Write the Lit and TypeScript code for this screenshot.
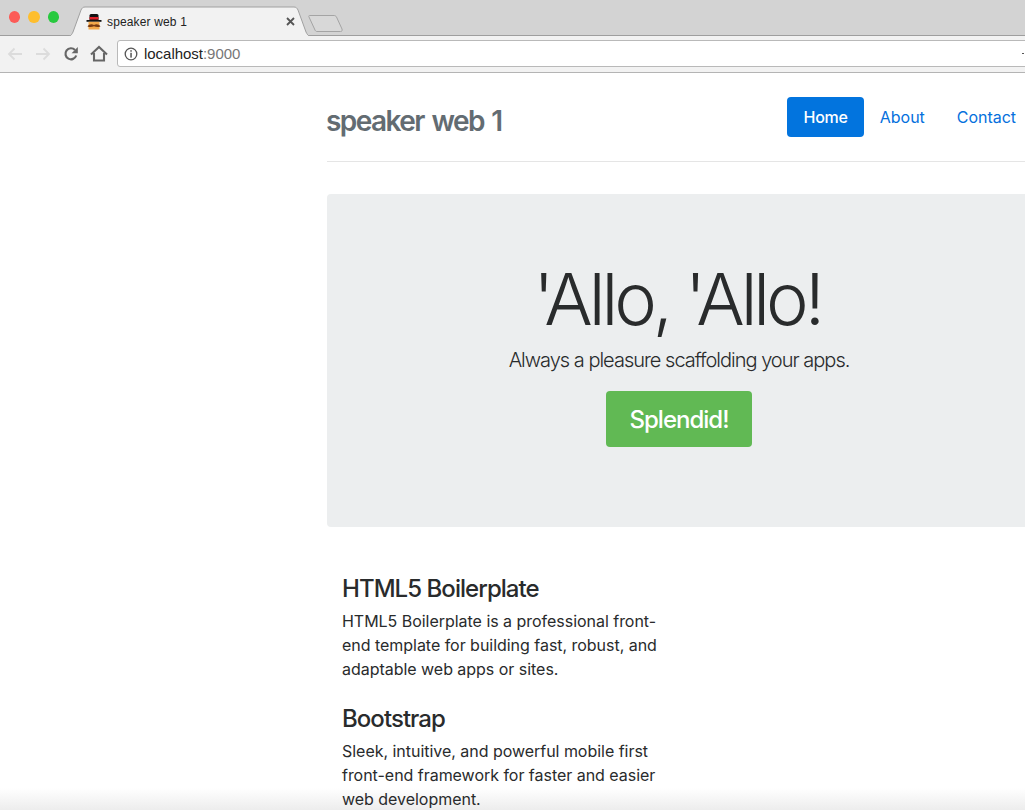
import { LitElement, html, css } from 'lit';
import { customElement } from 'lit/decorators.js';

/** Fake Chrome window frame: tab strip and toolbar. */
@customElement('browser-bar')
export class BrowserBar extends LitElement {
  static styles = css`
    :host {
      display: block;
      font-family: 'Liberation Sans', Arial, sans-serif;
    }
    .strip {
      display: flex;
      height: 36px;
      background: #d3d3d3;
      border-bottom: 1px solid #9e9e9e;
      box-sizing: border-box;
    }
    .lights {
      display: flex;
      gap: 8px;
      padding: 11px 0 0 9px;
      width: 59px;
      box-sizing: border-box;
    }
    .lights i {
      width: 12px;
      height: 12px;
      border-radius: 50%;
    }
    .tab {
      position: relative;
      width: 252px;
      height: 36px;
      flex: none;
    }
    .tab > svg {
      position: absolute;
      inset: 0;
    }
    .tab-body {
      position: relative;
      display: flex;
      align-items: center;
      height: 29px;
      padding: 7px 0 0 27px;
      font-size: 12px;
      color: #222;
    }
    .title {
      margin-left: 5px;
      flex: 1;
      letter-spacing: 0.15px;
    }
    .close {
      margin-right: 16px;
    }
    .newtab {
      margin: 14px 0 0 -3px;
    }
    .toolbar {
      display: flex;
      align-items: center;
      height: 37px;
      background: #f2f2f2;
      border-bottom: 1px solid #b4b4b4;
      box-sizing: border-box;
      padding: 0 0 1px 6px;
      gap: 10px;
    }
    .toolbar svg {
      flex: none;
    }
    .reload,
    .home {
      margin-left: 1px;
    }
    .address {
      display: flex;
      align-items: center;
      gap: 6px;
      flex: 1;
      height: 27px;
      margin: 0 -10px 0 -1px;
      padding: 0 10px 0 6px;
      background: #fff;
      border: 1px solid #b9b9b9;
      border-radius: 3px 0 0 3px;
      box-sizing: border-box;
      font-size: 15px;
      color: #222;
    }
    .address span {
      color: #777;
    }
    .edge {
      width: 2px;
      height: 1px;
      margin-left: auto;
      background: #555;
    }
  `;

  render() {
    return html`
      <div class="strip">
        <div class="lights">
          <i style="background:#fc5b57"></i>
          <i style="background:#febe2e"></i>
          <i style="background:#28c93f"></i>
        </div>
        <div class="tab">
          <svg width="252" height="36" viewBox="0 0 252 36">
            <path d="M10 36 C12 36 13 34 14 32 L22 10 C23 8 24 7 26 7 L235 7 C237 7 238 8 239 10 L247 32 C248 34 249 36 251 36" fill="#f2f2f2" stroke="#a0a0a0" />
          </svg>
          <div class="tab-body">
            <svg width="16" height="16" viewBox="0 0 16 16">
              <path d="M3.5 6 V1.5 C3.5 0.5 4.5 0 5.500 0 H10.500 C11.500 0 12.500 0.5 12.500 1.500 V6 Z" fill="#111" />
              <rect x="3.5" y="3" width="9" height="2.5" fill="#e0202a" />
              <rect x="0.5" y="6" width="15" height="1.8" fill="#151515" />
              <rect x="2.5" y="7.8" width="11" height="7.7" fill="#f5a94a" />
              <path d="M1.5 12.5 C3 9.500 6.500 9.800 8 11 C9.500 9.800 13 9.500 14.500 12.500 C12 13.500 9.500 13 8 12.300 C6.500 13 4 13.500 1.500 12.500Z" fill="#7a3b12" />
            </svg>
            <span class="title">speaker web 1</span>
            <svg class="close" width="9" height="9" viewBox="0 0 9 9">
              <path d="M1 1 L8 8 M8 1 L1 8" stroke="#555" stroke-width="1.8" />
            </svg>
          </div>
        </div>
        <svg class="newtab" width="36" height="19" viewBox="0 0 36 19">
          <path d="M1.5 1.5 L26 1.5 C27 1.5 28 2 28.5 3 L34 15 C34.5 16.5 34 17.5 32.5 17.5 L9 17.5 C8 17.5 7.5 17 7 16 L1 3 C0.5 2 0.8 1.5 1.5 1.5Z" fill="#d8d8d8" stroke="#a4a4a4" />
        </svg>
      </div>
      <div class="toolbar">
        <svg width="18" height="16" viewBox="0 0 18 16" fill="none" stroke="#dcdcdc" stroke-width="1.8">
          <path d="M16 8 H3 M8.5 2.5 L3 8 L8.5 13.5" />
        </svg>
        <svg width="18" height="16" viewBox="0 0 18 16" fill="none" stroke="#dcdcdc" stroke-width="1.8">
          <path d="M2 8 H15 M9.5 2.5 L15 8 L9.5 13.5" />
        </svg>
        <svg class="reload" width="16" height="16" viewBox="0 0 16 16" fill="none">
          <path d="M13.2 9.5 A5.5 5.5 0 1 1 12 4" stroke="#666" stroke-width="2.200" />
          <path d="M14.8 1 V7.200 H8.600 Z" fill="#666" />
        </svg>
        <svg class="home" width="18" height="17" viewBox="0 0 18 17" fill="none" stroke="#666" stroke-width="2.100">
          <path d="M1 9.500 L9 2 L17 9.500 M4 8 V15.500 H14 V8" />
        </svg>
        <div class="address">
          <svg width="14" height="14" viewBox="0 0 14 14" fill="none">
            <circle cx="7" cy="7" r="5.8" stroke="#555" stroke-width="1.3" />
            <rect x="6.3" y="3.2" width="1.5" height="1.5" fill="#555" />
            <rect x="6.3" y="5.8" width="1.5" height="4.8" fill="#555" />
          </svg>
          <div>localhost<span>:9000</span></div>
          <i class="edge"></i>
        </div>
      </div>
    `;
  }
}

@customElement('app-root')
export class AppRoot extends LitElement {
  static styles = css`
    :host {
      display: block;
      position: relative;
      width: 1025px;
      height: 810px;
      overflow: hidden;
      background: #fff;
      font-family: Inter, 'Liberation Sans', Arial, sans-serif;
      font-size: 16px;
      line-height: 24px;
      letter-spacing: -0.03px;
      color: #292b2c;
    }
    .container {
      position: relative;
      width: 704px;
      margin-left: 327px;
    }
    .header {
      display: flex;
      justify-content: space-between;
      align-items: center;
      height: 89px;
      border-bottom: 1px solid #e5e5e5;
      box-sizing: border-box;
    }
    .brand {
      margin: 7px 0 0 -1px;
      font-size: 28px;
      line-height: 34px;
      font-weight: 600;
      color: #636c72;
      letter-spacing: -1.55px;
      word-spacing: 2px;
    }
    .nav {
      display: flex;
      margin: 0 -1px 0 0;
      padding: 0;
      list-style: none;
    }
    .nav a {
      display: block;
      padding: 8px 16px;
      border-radius: 4px;
      color: #0570dd;
    }
    .nav a.active {
      background: #0274de;
      color: #fff;
      font-weight: 500;
      letter-spacing: -0.2px;
    }
    .jumbotron {
      display: flex;
      flex-direction: column;
      align-items: center;
      height: 333px;
      margin-top: 32px;
      padding-top: 62px;
      box-sizing: border-box;
      background: #eceeef;
      border-radius: 4px;
    }
    .jumbotron h1 {
      margin: 0 4px 3px 0;
      font-size: 72px;
      line-height: 86px;
      font-weight: 300;
      letter-spacing: -4.1px;
    }
    .lead {
      margin: 0 0 16px;
      font-size: 20px;
      line-height: 30px;
      font-weight: 300;
      letter-spacing: -1px;
    }
    .btn {
      padding: 11px 24px 9px;
      border-radius: 4px;
      background: #61b954;
      color: #fff;
      font-size: 24px;
      line-height: 36px;
      font-weight: 500;
      letter-spacing: -1px;
    }
    .marketing {
      width: 352px;
      margin-top: 47px;
      padding: 0 15px;
      box-sizing: border-box;
    }
    .marketing h4 {
      margin: 0 0 6px;
      font-size: 24px;
      line-height: 29px;
      font-weight: 500;
      letter-spacing: -0.95px;
    }
    .marketing p {
      margin: 0 0 23px;
    }
    .fade {
      position: absolute;
      left: 0;
      right: 0;
      bottom: 0;
      height: 22px;
      background: linear-gradient(rgba(232, 232, 232, 0), rgba(232, 232, 232, 0.8));
    }
  `;

  render() {
    return html`
      <browser-bar></browser-bar>
      <div class="fade"></div>
      <div class="container">
        <div class="header">
          <h3 class="brand">speaker web 1</h3>
          <ul class="nav">
            <li><a class="active">Home</a></li>
            <li><a>About</a></li>
            <li><a>Contact</a></li>
          </ul>
        </div>
        <div class="jumbotron">
          <h1>'Allo, 'Allo!</h1>
          <p class="lead">Always a pleasure scaffolding your apps.</p>
          <a class="btn">Splendid!</a>
        </div>
        <div class="marketing">
          <h4>HTML5 Boilerplate</h4>
          <p>HTML5 Boilerplate is a professional front-end template for building fast, robust, and adaptable web apps or sites.</p>
          <h4>Bootstrap</h4>
          <p>Sleek, intuitive, and powerful mobile first front-end framework for faster and easier web development.</p>
        </div>
      </div>
    `;
  }
}
